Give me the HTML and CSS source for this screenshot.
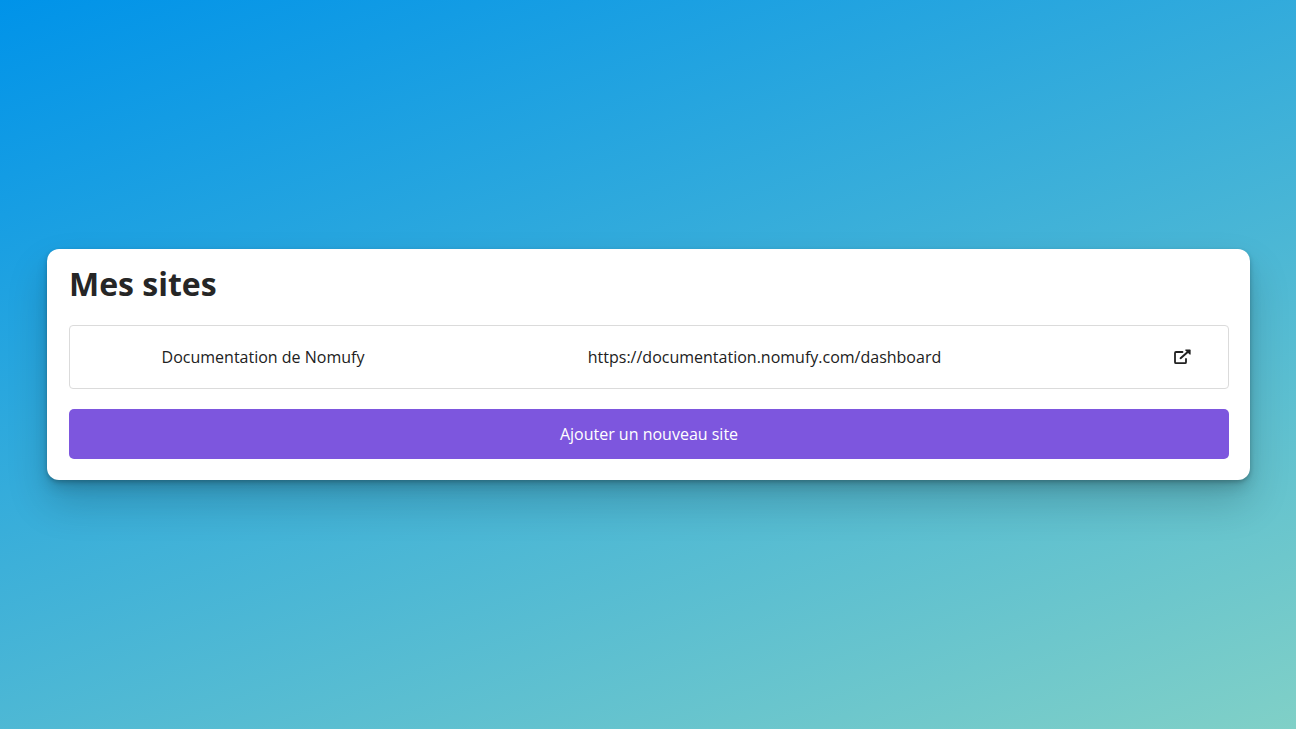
FILE: index.html
```html
<!DOCTYPE html>
<html lang="fr">
<head>
<meta charset="utf-8">
<title>Mes sites</title>
<link rel="stylesheet" href="styles.css">
</head>
<body>
<main class="card">
  <h1 class="title">Mes sites</h1>
  <div class="site">
    <span class="site-name">Documentation de Nomufy</span>
    <span class="site-url">https://documentation.nomufy.com/dashboard</span>
    <a class="site-link" href="#" aria-label="Ouvrir le site">
      <svg class="icon" viewBox="0 0 18 16" aria-hidden="true">
        <path d="M9.500 3H3Q2 3 2 4V13.200Q2 14.200 3 14.200H12Q13 14.200 13 13.200V10" fill="none" stroke="currentColor" stroke-width="1.800" stroke-linecap="round"/>
        <path d="M7.600 9.200L15 2.800" stroke="currentColor" stroke-width="2" stroke-linecap="round"/>
        <path d="M12.500 .6H17Q17.600 .6 17.600 1.200V5.200Q17.400 6 16.700 5.500L12.400 1.500Q12 .9 12.500 .6Z" fill="currentColor"/>
      </svg>
    </a>
  </div>
  <button class="add" type="button">Ajouter un nouveau site</button>
</main>
</body>
</html>
```
FILE: styles.css
```css
* {
  box-sizing: border-box;
}

body {
  margin: 0;
  min-height: 100vh;
  padding: 24px 46px 24px 47px;
  display: flex;
  align-items: center;
  font: 16px/24px "Open Sans", "Noto Sans", sans-serif;
  color: #212121;
  background: linear-gradient(160deg, #0093e9 0%, #80d0c7 100%);
}

.card {
  flex: 1;
  padding: 14px 21px 21px 22px;
  border-radius: 12px;
  background: #fff;
  box-shadow:
    0 2px 4px rgba(0, 0, 0, 0.2),
    0 8px 14px -2px rgba(0, 0, 0, 0.16),
    0 22px 40px rgba(0, 0, 0, 0.18);
}

.title {
  margin: 0 0 20px;
  font-size: 32px;
  line-height: 42px;
  font-weight: 700;
  color: #262626;
}

.site {
  display: grid;
  grid-template-columns: 386fr 617fr 155fr;
  align-items: center;
  min-height: 64px;
  padding: 19px 0;
  margin-bottom: 20px;
  border: 1px solid #dbdbdb;
  border-radius: 4px;
  text-align: center;
}

.site-link {
  display: flex;
  justify-content: flex-end;
  padding-right: 37px;
  color: inherit;
}

.icon {
  width: 18px;
  height: 16px;
}

.add {
  display: block;
  width: 100%;
  padding: 13px;
  border: 0;
  border-radius: 5px;
  background: #7d56de;
  color: #fff;
  font: inherit;
}
```
